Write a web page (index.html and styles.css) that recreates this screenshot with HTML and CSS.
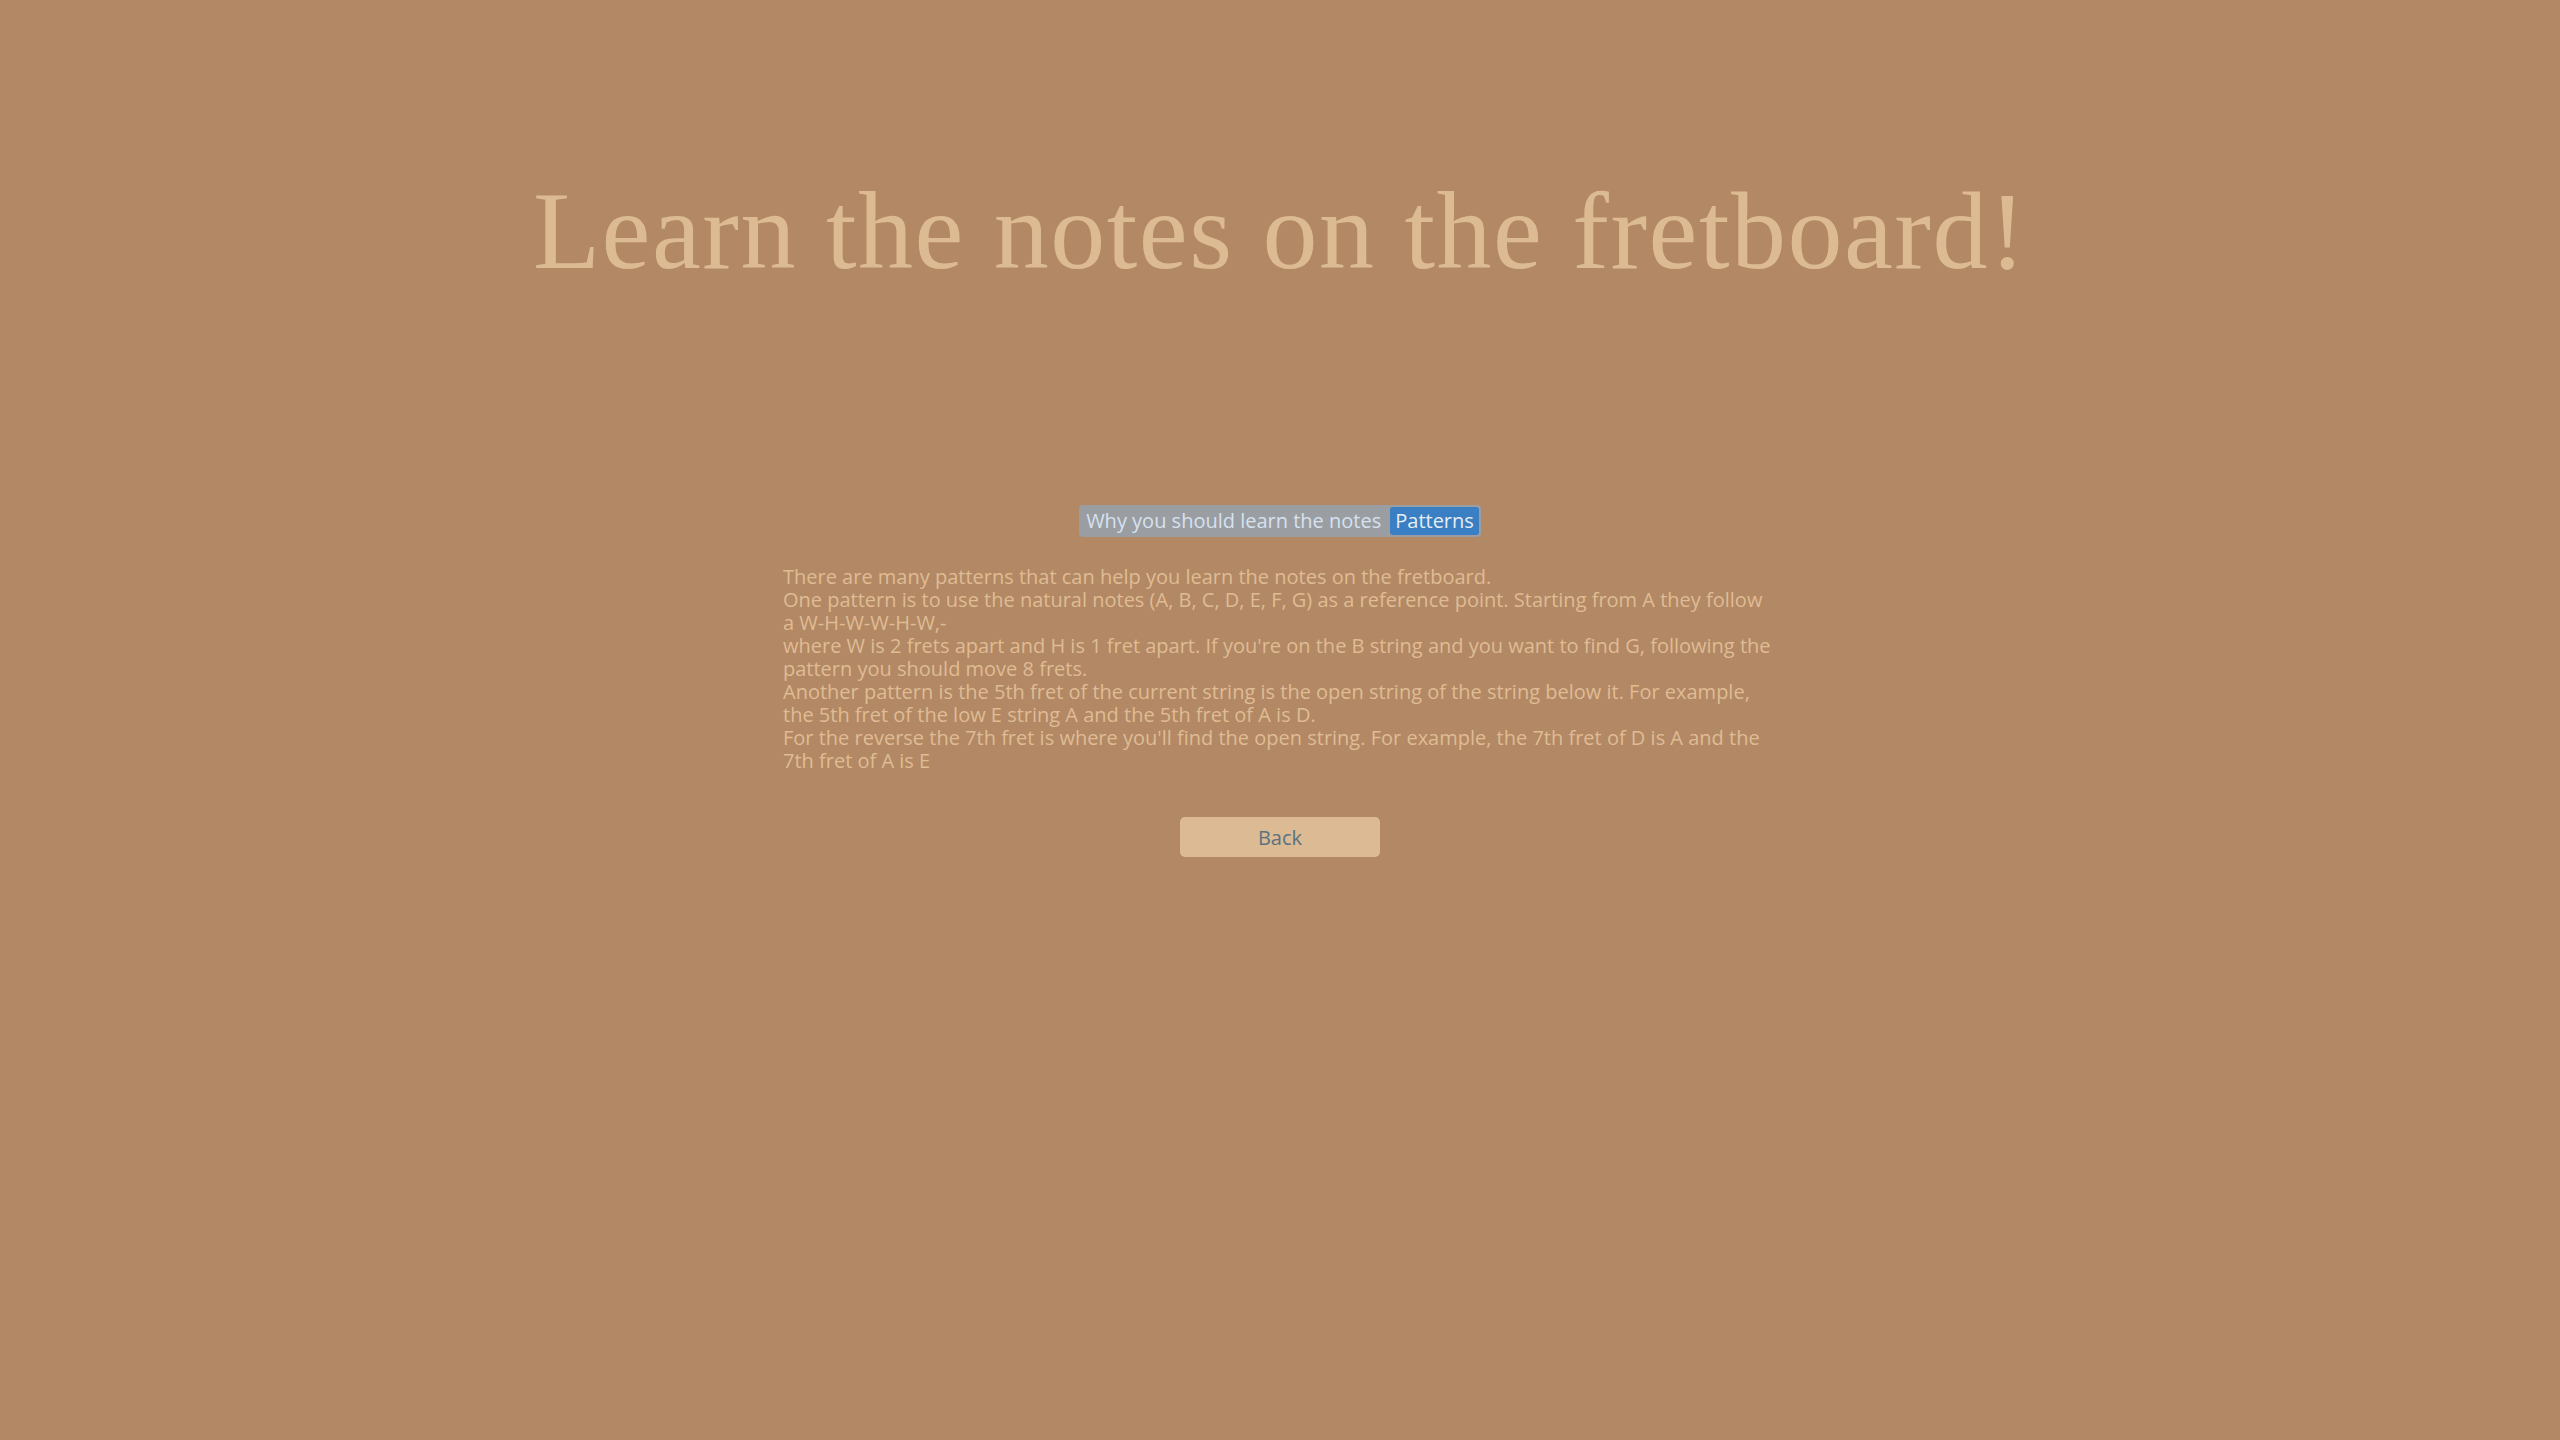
FILE: index.html
```html
<!DOCTYPE html>
<html lang="en">
<head>
<meta charset="utf-8">
<title>Learn the notes on the fretboard!</title>
<link rel="stylesheet" href="styles.css">
</head>
<body>
<header class="header">
  <h1 class="title">Learn the notes on the fretboard!</h1>
</header>
<main class="main">
  <nav class="tabs">
    <a class="tab">Why you should learn the notes</a>
    <a class="tab tab-active">Patterns</a>
  </nav>
  <div class="content">
    <p class="text">There are many patterns that can help you learn the notes on the fretboard.<br>One pattern is to use the natural notes (A, B, C, D, E, F, G) as a reference point. Starting from A they follow a W-H-W-W-H-W,-<br>where W is 2 frets apart and H is 1 fret apart. If you're on the B string and you want to find G, following the pattern you should move 8 frets.<br>Another pattern is the 5th fret of the current string is the open string of the string below it. For example, the 5th fret of the low E string A and the 5th fret of A is D.<br>For the reverse the 7th fret is where you'll find the open string. For example, the 7th fret of D is A and the 7th fret of A is E</p>
  </div>
  <button class="back">Back</button>
</main>
</body>
</html>
```
FILE: styles.css
```css
html, body {
  margin: 0;
  padding: 0;
}
body {
  background: #b38865;
  min-height: 1440px;
  font-family: "Open Sans", "Lato", sans-serif;
}
.header {
  padding-top: 165px;
  display: flex;
  justify-content: center;
}
.title {
  margin: 0;
  font-family: "Liberation Serif", serif;
  font-weight: 400;
  font-size: 110px;
  line-height: 132px;
  letter-spacing: 1.5px;
  color: #dcbb93;
}
.main {
  display: flex;
  flex-direction: column;
  align-items: center;
  padding-top: 208px;
}
.tabs {
  display: flex;
  gap: 4px;
  padding: 2px;
  background: #9a9da2;
  border-radius: 4px;
}
.tab {
  font-size: 20px;
  line-height: 28px;
  padding: 0 5px;
  color: #d6e2ee;
  border-radius: 3px;
}
.tab-active {
  background: #3a7ec3;
  color: #e6edf4;
}
.content {
  width: 994px;
  margin-top: 28px;
}
.text {
  margin: 0;
  font-size: 20px;
  line-height: 23px;
  color: #dfbc93;
}
.back {
  margin-top: 45px;
  width: 200px;
  height: 40px;
  border: none;
  border-radius: 5px;
  background: #dcba93;
  color: #5b7281;
  font-family: "Open Sans", "Lato", sans-serif;
  font-size: 20px;
}
```
